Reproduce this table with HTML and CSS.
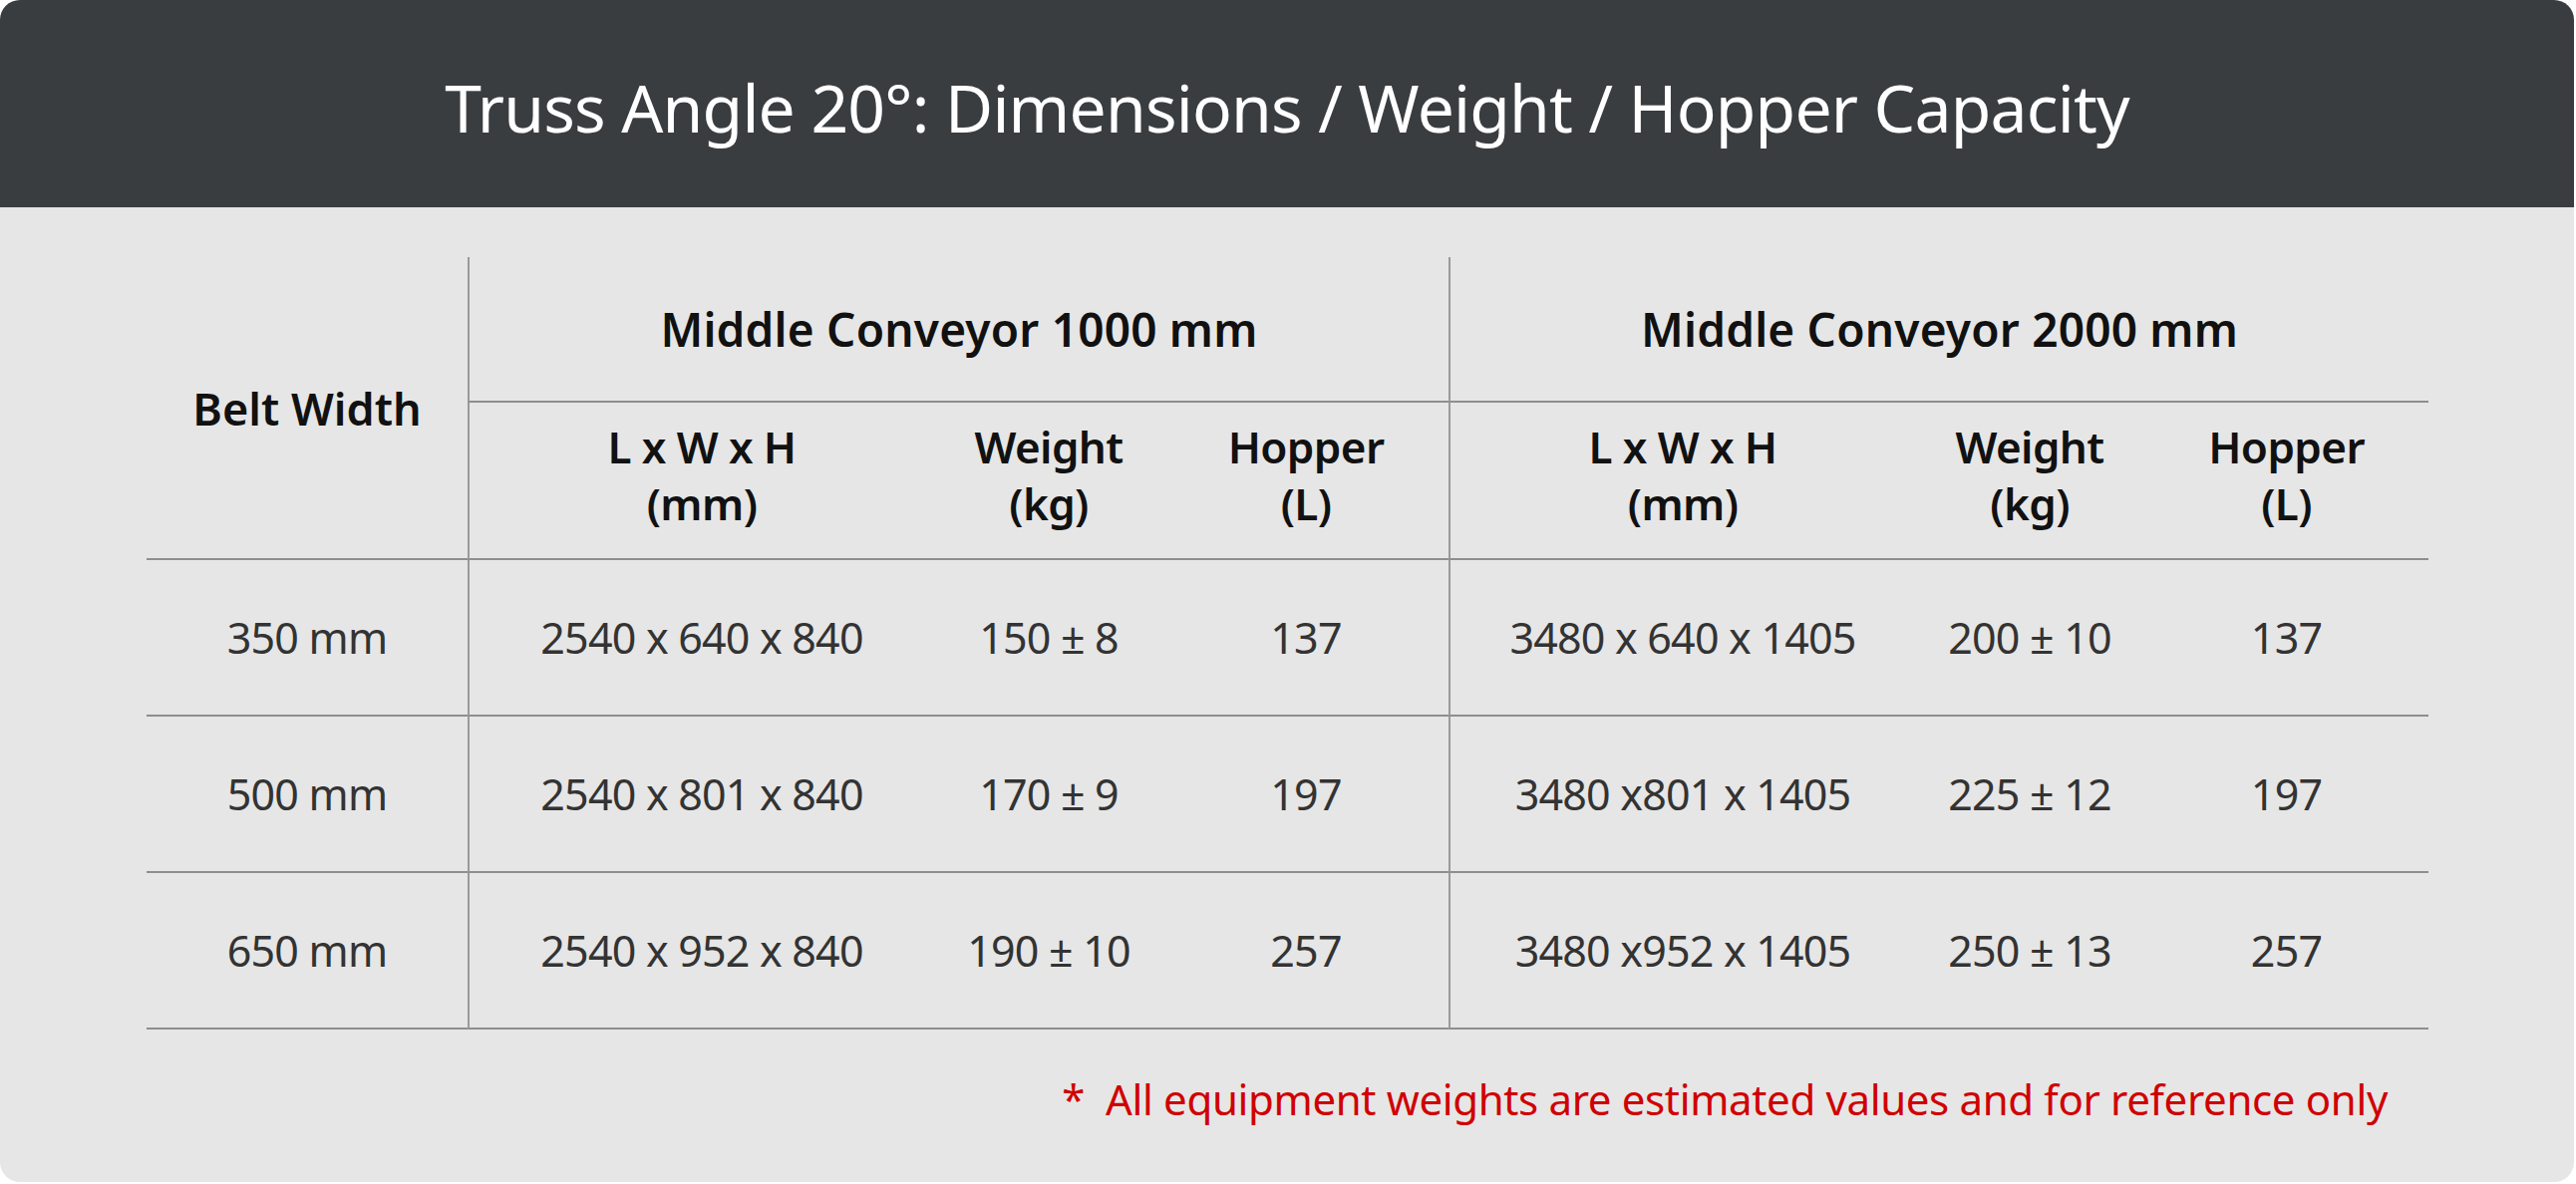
FILE: index.html
```html
<!DOCTYPE html>
<html lang="en">
<head>
<meta charset="utf-8">
<title>Truss Angle 20°: Dimensions / Weight / Hopper Capacity</title>
<link rel="stylesheet" href="styles.css">
</head>
<body>
<div class="card">
  <header class="card-header">
    <h1 class="title">Truss Angle 20°: Dimensions / Weight / Hopper Capacity</h1>
  </header>
  <section class="card-body">
    <table class="spec">
      <colgroup>
        <col class="c-belt">
        <col class="c-dim">
        <col class="c-wt">
        <col class="c-hop">
        <col class="c-dim">
        <col class="c-wt">
        <col class="c-hop2">
      </colgroup>
      <thead>
        <tr class="r-group">
          <th class="belt" rowspan="2">Belt Width</th>
          <th class="group vl" colspan="3">Middle Conveyor 1000 mm</th>
          <th class="group vl" colspan="3">Middle Conveyor 2000 mm</th>
        </tr>
        <tr class="r-sub">
          <th class="sub vl">L x W x H<br>(mm)</th>
          <th class="sub">Weight<br>(kg)</th>
          <th class="sub">Hopper<br>(L)</th>
          <th class="sub vl">L x W x H<br>(mm)</th>
          <th class="sub">Weight<br>(kg)</th>
          <th class="sub">Hopper<br>(L)</th>
        </tr>
      </thead>
      <tbody>
        <tr>
          <td>350 mm</td>
          <td class="vl">2540 x 640 x 840</td>
          <td>150 ± 8</td>
          <td>137</td>
          <td class="vl">3480 x 640 x 1405</td>
          <td>200 ± 10</td>
          <td>137</td>
        </tr>
        <tr>
          <td>500 mm</td>
          <td class="vl">2540 x 801 x 840</td>
          <td>170 ± 9</td>
          <td>197</td>
          <td class="vl">3480 x801 x 1405</td>
          <td>225 ± 12</td>
          <td>197</td>
        </tr>
        <tr>
          <td>650 mm</td>
          <td class="vl">2540 x 952 x 840</td>
          <td>190 ± 10</td>
          <td>257</td>
          <td class="vl">3480 x952 x 1405</td>
          <td>250 ± 13</td>
          <td>257</td>
        </tr>
      </tbody>
    </table>
    <p class="note">*&nbsp; All equipment weights are estimated values and for reference only</p>
  </section>
</div>
</body>
</html>
```

FILE: styles.css
```css
* {
  box-sizing: border-box;
}

html, body {
  margin: 0;
  padding: 0;
  background: #ffffff;
}

body {
  font-family: "Noto Sans", "Open Sans", "Liberation Sans", sans-serif;
}

.card {
  width: 2582px;
  height: 1186px;
  background: #e6e6e6;
  border-radius: 20px;
  overflow: hidden;
}

.card-header {
  height: 208px;
  background: #3a3d40;
  display: flex;
  align-items: center;
  justify-content: center;
  padding-top: 8px;
}

.title {
  margin: 0;
  color: #ffffff;
  font-size: 66px;
  font-weight: 400;
  letter-spacing: -0.8px;
  line-height: 1.2;
}

.card-body {
  padding: 50px 0 0 147px;
}

.spec {
  width: 2289px;
  table-layout: fixed;
  border-collapse: separate;
  border-spacing: 0;
}

.c-belt { width: 322px; }
.c-dim { width: 468px; }
.c-wt { width: 230px; }
.c-hop { width: 286px; }
.c-hop2 { width: 285px; }

.spec th,
.spec td {
  padding: 0;
  text-align: center;
  vertical-align: middle;
  border-bottom: 2px solid #8e8e8e;
}

.spec th {
  color: #111111;
  font-weight: 600;
  font-size: 44px;
  line-height: 57px;
}

.spec .group {
  font-size: 46px;
  letter-spacing: 0.2px;
}

.spec .belt {
  font-size: 45px;
  line-height: 61px;
}

.spec .sub {
  letter-spacing: -0.6px;
  padding-bottom: 10px;
}

.spec td {
  color: #333333;
  font-weight: 400;
  font-size: 43px;
  letter-spacing: -0.8px;
  line-height: 60px;
  height: 157px;
}

.spec .vl {
  border-left: 2px solid #9a9a9a;
}

.r-group th {
  height: 146px;
}

.r-sub th {
  height: 158px;
}

.note {
  margin: 40px 0 0 0;
  width: 2289px;
  padding-right: 41px;
  text-align: right;
  color: #d00000;
  font-size: 42px;
  letter-spacing: -0.35px;
  line-height: 60px;
  white-space: nowrap;
}
```
